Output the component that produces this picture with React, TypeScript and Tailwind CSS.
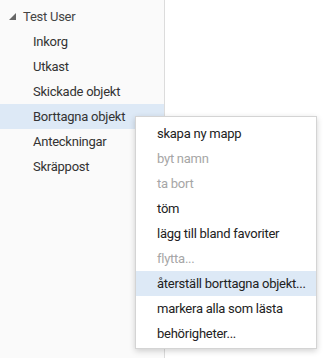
import React from "react";

const folders = ["Inkorg", "Utkast", "Skickade objekt", "Borttagna objekt", "Anteckningar", "Skräppost"];
const items: { label: string; disabled?: boolean; active?: boolean }[] = [
  { label: "skapa ny mapp" },
  { label: "byt namn", disabled: true },
  { label: "ta bort", disabled: true },
  { label: "töm" },
  { label: "lägg till bland favoriter" },
  { label: "flytta...", disabled: true },
  { label: "återställ borttagna objekt...", active: true },
  { label: "markera alla som lästa" },
  { label: "behörigheter..." },
];

export default function App() {
  return (
    <div
      className="relative w-[323px] h-[358px] bg-white overflow-hidden text-[13px] tracking-[-0.25px] text-[#333]"
      style={{ fontFamily: 'Roboto, "Open Sans", sans-serif' }}
    >
      <div className="flex h-full">
        <div className="w-[165px] h-full bg-[#fafafa] border-r border-[#dcdcdc] pt-[4px]">
          <div className="h-[25px] flex items-center pl-[9px] text-[#444]">
            <svg width="7" height="7" viewBox="0 0 7 7" className="mr-[7px]">
              <polygon points="7,0 7,7 0,7" fill="#666" />
            </svg>
            Test User
          </div>
          {folders.map((f) => (
            <div
              key={f}
              className={`h-[25px] flex items-center pl-[33px] ${f === "Borttagna objekt" ? "bg-[#dde9f6]" : ""}`}
            >
              {f}
            </div>
          ))}
        </div>
        <div className="flex-1" />
      </div>
      <div className="absolute left-[135px] top-[116px] w-[182px] bg-white border border-[#d4d4d4] shadow-[0_2px_6px_rgba(0,0,0,0.18)] pt-[4px] pb-[2px]">
        {items.map((it) => (
          <div
            key={it.label}
            className={`h-[25px] flex items-center pl-[21px] whitespace-nowrap ${it.disabled ? "text-[#a6a6a6]" : "text-[#222]"} ${it.active ? "bg-[#dde9f6]" : ""}`}
          >
            {it.label}
          </div>
        ))}
      </div>
    </div>
  );
}
